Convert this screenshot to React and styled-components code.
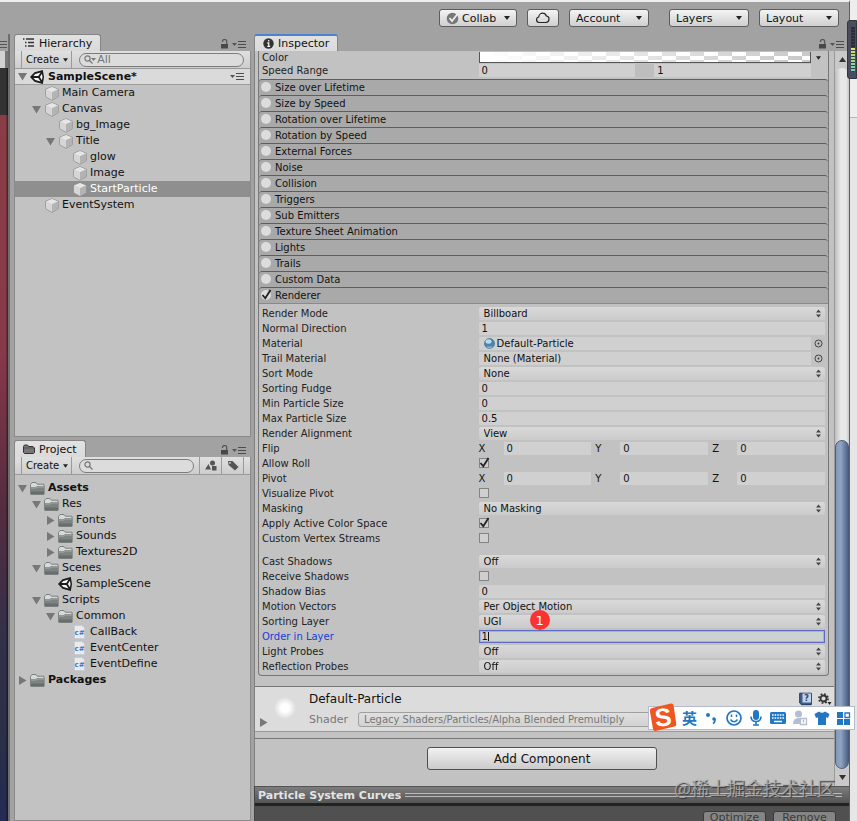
import React, { useId, useState } from 'react';
import styled, { createGlobalStyle, css } from 'styled-components';

const GlobalStyle = createGlobalStyle`
  * {
    box-sizing: border-box;
  }
  body {
    margin: 0;
    overflow: hidden;
    font-family: "DejaVu Sans", "Noto Sans CJK SC", sans-serif;
    font-size: 11px;
    color: #111;
  }
  button, input, select {
    font: inherit;
    color: inherit;
    margin: 0;
    padding: 0;
    border: 0;
    border-radius: 0;
    background: none;
  }
  svg {
    display: block;
    flex: none;
  }
`;

const Screen = styled.div`
  position: relative;
  display: flex;
  height: 100vh;
  overflow: hidden;
  background: #e9e9e9;
`;

const Editor = styled.div`
  flex: 1;
  min-width: 0;
  display: flex;
  flex-direction: column;
  background: #a2a2a2;
  border-top: 2px solid #efefef;
  border-right: 1px solid #5f5f5f;
`;

const Desktop = styled.div`
  width: 7px;
  background: linear-gradient(#eeeeee 117px, #b5b5b5 117px, #b5b5b5 118px, #e6e6e6 118px);
`;

const Meter = styled.div`
  position: absolute;
  top: 20px;
  right: 0;
  width: 10px;
  height: 59px;
  padding: 6px 1px 6px 3px;
  background: #4a4d5c;
  border: 1px solid #33353f;
  border-radius: 3px 0 0 3px;
`;

const MeterBars = styled.div`
  width: 4px;
  height: 100%;
  background:
    repeating-linear-gradient(transparent 0 2px, #3c3f4c 2px 3px),
    linear-gradient(#2b2e38 46%, #e6e470 46%, #a9dc7c 65%, #6cd0c4);
`;

/* top toolbar */

const MainToolbar = styled.header`
  display: flex;
  justify-content: flex-end;
  gap: 10px;
  height: 32px;
  padding: 7px 10px 0 0;
`;

const ToolbarButton = styled.button`
  display: flex;
  align-items: center;
  gap: 3px;
  width: ${(p) => p.$width || 80}px;
  height: 18px;
  margin-left: ${(p) => (p.$apart ? 10 : 0)}px;
  padding: 0 6px;
  border: 1px solid #5d5d5d;
  border-radius: 3px;
  background: linear-gradient(#f4f4f4, #cfcfcf);

  svg:last-child {
    margin-left: auto;
  }
`;

/* docked panels */

const Workspace = styled.main`
  flex: 1;
  min-height: 0;
  display: flex;
`;

const SceneEdge = styled.div`
  width: 10px;
  margin-right: 4px;
  display: flex;
  flex-direction: column;
  border-right: 2px solid #6d6d6d;
`;

const SceneEdgeTab = styled.div`
  height: 17px;
  padding-top: 7px;
`;

const SceneEdgeBar = styled.div`
  height: 17px;
  border-right: 3px solid #777;
  background: #d2d2d2;
`;

const SceneEdgeView = styled.div`
  flex: 1;
  background:
    linear-gradient(90deg, transparent 70%, #0008),
    linear-gradient(#333 47px, #8b3d45 47px, #86394a 38%, #552c40 58%, #33304a 76%, #2b2f47 88%, #242b55);
`;

const SideColumn = styled.div`
  width: 237px;
  margin-right: 3px;
  display: flex;
  flex-direction: column;
  gap: 3px;
`;

const Panel = styled.section`
  flex: ${(p) => p.$grow || 1} 1 0;
  min-width: 0;
  min-height: 0;
  display: flex;
  flex-direction: column;
`;

const TabBar = styled.div`
  display: flex;
  align-items: flex-end;
  height: 17px;
  padding-right: 4px;
`;

const Tab = styled.button`
  display: flex;
  align-items: center;
  gap: 4px;
  height: 17px;
  padding: 0 8px;
  border: 1px solid #858585;
  border-bottom: 0;
  border-top: ${(p) => (p.$focused ? '2px solid #4b82d2' : '1px solid #858585')};
  border-radius: 3px 3px 0 0;
  background: linear-gradient(#e2e2e2, #dadada);
`;

const TabTools = styled.div`
  display: flex;
  align-items: flex-end;
  gap: 3px;
  margin-left: auto;
  padding-bottom: 2px;
`;

const PanelBody = styled.div`
  flex: 1;
  min-height: 0;
  border: 1px solid #8b8b8b;
  border-top: 0;
  background: #c2c2c2;
`;

const PanelToolbar = styled.div`
  display: flex;
  align-items: center;
  height: 18px;
  padding: 0 6px;
  border-bottom: 1px solid #9a9a9a;
  background: linear-gradient(#e0e0e0, #cdcdcd);
`;

const CreateButton = styled.button`
  display: flex;
  align-items: center;
  gap: 4px;
  height: 17px;
  margin-right: 7px;
  padding: 0 3px 0 4px;
  border: solid #9a9a9a;
  border-width: 0 1px;
  font-size: 10px;
`;

const Search = styled.label`
  flex: 1;
  min-width: 0;
  display: flex;
  align-items: center;
  gap: 1px;
  height: 14px;
  padding: 0 4px;
  border: 1px solid #7d7d7d;
  border-radius: 7px;
  background: #dcdcdc;
`;

const SearchInput = styled.input`
  flex: 1;
  width: 0;
  min-width: 0;
  height: 12px;
  outline: 0;

  &::placeholder {
    color: #777;
    opacity: 1;
  }
`;

const Filters = styled.div`
  display: flex;
  margin-left: 5px;
  border-right: 1px solid #9a9a9a;
`;

const FilterButton = styled.button`
  display: grid;
  place-items: center;
  width: 22px;
  height: 17px;
  border-left: 1px solid #9a9a9a;
`;

const Tree = styled.ul`
  margin: 0;
  padding: ${(p) => (p.$spaced ? 5 : 0)}px 0 0;
  list-style: none;
`;

const TreeRow = styled.li`
  display: flex;
  align-items: center;
  gap: 3px;
  height: 16px;
  padding-left: ${(p) => 3 + p.$depth * 14}px;
  padding-right: 5px;
  line-height: 16px;
  white-space: nowrap;

  ${(p) => p.$bold && css`
    font-weight: bold;
  `}
  ${(p) => p.$scene && css`
    border-bottom: 1px solid #9b9b9b;
    background: #dadada;
  `}
  ${(p) => p.$selected && css`
    background: #8f8f8f;
    color: #fff;
  `}
`;

const Arrow = styled.span`
  width: 9px;
`;

const IconSlot = styled.span`
  display: grid;
  place-items: center;
  width: 15px;
`;

const RowMenu = styled.span`
  margin-left: auto;
`;

/* inspector */

const InspectorBody = styled.div`
  flex: 1;
  min-height: 0;
  display: flex;
  border-left: 1px solid #808080;
  background: #c2c2c2;
`;

const InspectorContent = styled.div`
  flex: 1;
  min-width: 0;
`;

const ModuleBox = styled.div`
  margin: 0 5px 10px 3px;
  border: 1px solid #777;
  border-top: 0;
  border-radius: 0 0 4px 4px;
`;

const ModuleFields = styled.div`
  padding: ${(p) => (p.$first ? '0 3px 1px' : '3px 3px 1px')};
`;

const ModuleHeader = styled.label`
  display: flex;
  align-items: center;
  gap: 3px;
  height: 16px;
  padding-left: 2px;
  border-top: 1px solid #5e5e5e;
  border-radius: 3px 3px 0 0;
  background: #a9a9a9;
  font-size: 10px;

  &:last-of-type {
    box-shadow: 0 1px #8a8a8a;
  }
`;

const TickBox = styled.span`
  position: relative;
  display: block;
  width: 11px;
  height: 11px;
`;

const TickInput = styled.input`
  appearance: none;
  display: block;
  width: 10px;
  height: 10px;
  border: ${(p) => (p.$round ? '0' : '1px solid #848484')};
  border-radius: ${(p) => (p.$round ? '5px' : '0')};
  background: ${(p) => (p.$round ? '#dcdcdc' : '#cfcfcf')};
`;

const TickMark = styled.svg`
  position: absolute;
  top: -1px;
  left: 0;
  pointer-events: none;
`;

const FieldRow = styled.div`
  display: grid;
  grid-template-columns: minmax(0, 5fr) minmax(0, 8fr);
  align-items: center;
  height: ${(p) => (p.$clipped ? 12 : 15)}px;
  margin-top: ${(p) => (p.$spaced ? 8 : 0)}px;
  font-size: 10px;
  line-height: 13px;
  white-space: nowrap;
`;

const FieldLabel = styled.label`
  color: ${(p) => (p.$active ? '#1440d8' : '#222')};
`;

const FieldValue = styled.div`
  position: relative;
  display: flex;
  align-items: center;
  gap: ${(p) => p.$gap || 0}px;
`;

const TextInput = styled.input`
  flex: 1;
  width: 0;
  height: 13px;
  padding: 0 3px;
  background: #d0d0d0;
  outline: 0;

  ${(p) => p.$active && css`
    padding: 0 2px;
    border: 1px solid #5f6cc4;
    box-shadow: inset 0 0 0 1px #a7aee6;
    background: #ccd2cf;
    caret-color: transparent;
  `}
`;

const TextCaret = styled.span`
  position: absolute;
  left: 9px;
  top: 2px;
  width: 1px;
  height: 9px;
  background: #111;
`;

const Popup = styled.select`
  appearance: none;
  flex: 1;
  height: 13px;
  padding: 0 5px;
  border-radius: 2px;
  background: linear-gradient(#d9d9d9, #cbcbcb);
  outline: 0;
`;

const PopupArrows = styled.svg`
  position: absolute;
  right: 4px;
  top: 2px;
  pointer-events: none;
`;

const ObjectField = styled.button`
  flex: 1;
  display: flex;
  align-items: center;
  gap: 2px;
  height: 13px;
  padding-left: 5px;
  background: #d0d0d0;
`;

const PickerButton = styled.button`
  display: grid;
  place-items: center;
  width: 14px;
  height: 13px;
`;

const Axis = styled.label`
  flex: 1;
  display: flex;
  align-items: center;
`;

const AxisName = styled.span`
  width: 25px;
`;

const ColorSwatch = styled.button`
  flex: 1;
  height: 11px;
  border: 1px solid #555;
  border-top: 0;
  background:
    linear-gradient(90deg, #fff, transparent),
    repeating-conic-gradient(#c8c8c8 0 25%, #fff 0 50%) 0 0 / 28px 8px;
`;

const RangeGap = styled.span`
  width: 19px;
  height: 13px;
  background: #bebebe;
`;

const Badge = styled.span`
  position: absolute;
  left: 51px;
  top: -20px;
  z-index: 1;
  display: grid;
  place-items: center;
  width: 20px;
  height: 20px;
  border-radius: 10px;
  background: #fa3232;
  color: #fff;
  font-size: 13px;
`;

const MaterialPanel = styled.div`
  display: flex;
  height: 46px;
  border-top: 1px solid #777;
  border-bottom: 1px solid #999;
  background: #dcdcdc;
`;

const MaterialFoldout = styled.div`
  display: flex;
  align-items: flex-end;
  padding: 0 0 4px 4px;
`;

const MaterialPreview = styled.div`
  width: 39px;
  margin-right: 2px;
  background: radial-gradient(circle at 17px 21px, #fff 4px, #dcdcdc 11px);
`;

const MaterialInfo = styled.div`
  flex: 1;
  min-width: 0;
  padding: 2px 2px 0 0;
`;

const MaterialLine = styled.div`
  display: flex;
  align-items: center;
  gap: 6px;
  height: 20px;
`;

const MaterialName = styled.span`
  flex: 1;
  font-size: 12px;
`;

const ShaderLabel = styled.label`
  width: 43px;
  color: #777;
`;

const ShaderSelect = styled.select`
  appearance: none;
  flex: 1;
  min-width: 0;
  height: 15px;
  padding: 0 5px;
  border: 1px solid #a0a0a0;
  border-radius: 3px;
  background: linear-gradient(#e0e0e0, #d2d2d2);
  color: #777;
  font-size: 10px;
  opacity: 1;
`;

const AddComponentArea = styled.div`
  display: flex;
  justify-content: center;
  margin-top: 6px;
  padding: 8px 5px 0 0;
  border-top: 1px solid #777;
`;

const AddComponentButton = styled.button`
  width: 230px;
  height: 23px;
  border: 1px solid #4f4f4f;
  border-radius: 3px;
  background: linear-gradient(#f2f2f2, #cbcbcb);
  font-size: 12px;
`;

const ScrollBar = styled.div`
  display: flex;
  flex-direction: column;
  align-items: center;
  width: 15px;
  border-left: 1px solid #9a9a9a;
  background: #c9c9c9;
`;

const ScrollArrow = styled.button`
  display: grid;
  place-items: center;
  width: 14px;
  height: 17px;
`;

const ScrollTrack = styled.div`
  flex: 1;
  display: flex;
  align-items: flex-end;
  width: 14px;
  border-radius: 7px;
  background: linear-gradient(90deg, #bdbdbd, #e8e8e8 40%, #e8e8e8 80%, #c4c4c4);
`;

const ScrollThumb = styled.div`
  width: 14px;
  height: 47%;
  border: 1px solid #4a5a78;
  border-radius: 7px;
  background: linear-gradient(90deg, #8499b8, #90a4c4 40%, #6d82a3 70%, #4d6285);
`;

const CurvesPanel = styled.section`
  height: 35px;
  overflow: hidden;
  border-left: 1px solid #444;
  background: #505050;
`;

const CurvesHeader = styled.div`
  display: flex;
  align-items: center;
  gap: 4px;
  height: 17px;
  padding: 0 7px 0 3px;
  border-top: 1px solid #555;
  background: linear-gradient(#7c7c7c, #555);
  color: #e4e4e4;
  font-weight: bold;
`;

const CurvesLines = styled.span`
  flex: 1;
  height: 4px;
  border: solid #b9b9b9;
  border-width: 1px 0;
`;

const CurvesTools = styled.div`
  display: flex;
  justify-content: flex-end;
  gap: 7px;
  padding: 5px 13px 0;
  border-top: 3px solid #222;
`;

const CurvesButton = styled.button`
  width: 63px;
  height: 18px;
  flex: none;
  padding-bottom: 6px;
  border: 1px solid #3a3a3a;
  border-radius: 3px;
  background: #858585;
  color: #3c3c3c;
  line-height: 11px;
`;

/* things floating over the editor */

const ImeBar = styled.div`
  position: absolute;
  top: 706px;
  right: 2px;
  display: flex;
  align-items: center;
  gap: 6px;
  height: 24px;
  padding: 0 3px 0 33px;
  border: 1px solid #b4bccb;
  background: #fff;
  color: #2277c2;
`;

const ImeLogo = styled.svg`
  position: absolute;
  left: 0;
  top: -5px;
`;

const ImeMode = styled.span`
  width: 16px;
  font: bold 15px/20px "Noto Sans CJK SC", sans-serif;
`;

const Watermark = styled.div`
  position: absolute;
  top: 774px;
  right: 22px;
  color: #b5b5b5cc;
  font: 18px/26px "Noto Sans CJK SC", sans-serif;
  text-shadow: 1px 1px 1px #333;
`;

const MenuIcon = () => (
  <svg width="15" height="9" viewBox="0 0 15 9">
    <path d="M0 3h5L2.500 6z" fill="#555" />
    <path d="M6 1.500h8M6 4.500h8M6 7.500h8" stroke="#4c4c4c" strokeWidth="1.200" />
  </svg>
);

const LockIcon = () => (
  <svg width="9" height="10" viewBox="0 0 9 10">
    <path d="M1 5h7v4.500H1z" fill="#484848" />
    <path d="M2.500 3V2.500a2 2 0 0 1 4.200 0V5" fill="none" stroke="#555" strokeWidth="1.200" />
  </svg>
);

const Caret = ({ size = 6 }) => (
  <svg width={size} height="4" viewBox="0 0 6 4">
    <path d="M0 0h6L3 4z" fill="#222" />
  </svg>
);

const Foldout = ({ open }) => (
  <svg width="9" height="9" viewBox="0 0 9 9">
    <path d={open ? 'M0 1h9L4.500 8.500z' : 'M1 0l7.500 4.500L1 9z'} fill="#777" />
  </svg>
);

const HierarchyIcon = () => (
  <svg width="12" height="10" viewBox="0 0 12 10">
    <path d="M0 1h1.500M3 1h8M2 4.500h1.500M5 4.500h6M2 8h1.500M5 8h6" stroke="#333" strokeWidth="1.300" />
  </svg>
);

const InfoIcon = () => (
  <svg width="11" height="11" viewBox="0 0 11 11">
    <circle cx="5.500" cy="5.500" r="5.200" fill="#333" />
    <path d="M5.700 2v1.600M4.300 5h1.400v3.300M4.200 8.300h3" stroke="#eee" strokeWidth="1.300" fill="none" />
  </svg>
);

const SmallFolderIcon = () => (
  <svg width="12" height="10" viewBox="0 0 12 10">
    <path d="M.5 8.500v-6l1-1.500h3l1 1.500H10L11.500 4v4.500l-1 1h-9z" fill="#777" stroke="#333" />
    <path d="M1 4h10" stroke="#555" />
  </svg>
);

const SearchIcon = ({ filter }) => (
  <svg width={filter ? 12 : 9} height="9" viewBox={filter ? '0 0 12 9' : '0 0 9 9'}>
    <circle cx="3.500" cy="3.500" r="2.600" fill="none" stroke="#777" strokeWidth="1.200" />
    <path d="M5.500 5.500L8.500 8.500" stroke="#777" strokeWidth="1.300" />
    {filter && <path d="M7 3h5l-2.500 3z" fill="#777" />}
  </svg>
);

const CubeIcon = () => (
  <svg width="14" height="15" viewBox="0 0 14 15">
    <path d="M7 .7l6.300 2.600v7.400L7 14.300.7 10.700V3.300z" fill="#c4c4c4" stroke="#8d8d8d" strokeWidth=".8" />
    <path d="M7 1l6 2.500L7 6.200 1 3.500z" fill="#e6e6e6" />
    <path d="M1 3.500l6 2.700v7.500l-6-3.300z" fill="#d6d6d6" />
    <path d="M7 6.200l6-2.700v6.900l-6 3.300z" fill="#b3b3b3" />
  </svg>
);

const UnityIcon = () => (
  <svg width="15" height="14" viewBox="0 0 15 14">
    <path d="M0 7L4.500 2.200 12.800 0 14 7l-1.200 7-8.300-2.200z" fill="#1b1b1b" />
    <path d="M5.300 3.900L10.600 2.500 8.300 6H3.400zM3.400 8h4.900l2.300 3.500-5.300-1.400zM9.800 7l2.100-3.300.6 3.300-.6 3.300z" fill="#f5f5f5" />
  </svg>
);

const FolderIcon = () => (
  <svg width="15" height="13" viewBox="0 0 15 13">
    <path d="M.5 12V2.500l1.500-2h4l1.300 1.700H14V12z" fill="#d5d9d8" stroke="#7c8280" />
    <path d="M.5 5H6l1-1h7.500v8.500H.5z" fill="#7c8381" />
    <path d="M1 6h5.500l1-1H14" stroke="#a4aaa8" fill="none" />
    <path d="M1 9.500h13v3H1z" fill="#666d6b" />
  </svg>
);

const ScriptIcon = () => (
  <svg width="11" height="14" viewBox="0 0 11 14">
    <path d="M.5.500H8L10.500 3v10.500H.5z" fill="#e8ebf0" stroke="#c5cad2" strokeWidth=".8" />
    <text x="5.500" y="10" textAnchor="middle" fontSize="7" fontWeight="bold" fill="#3f78c8">c#</text>
  </svg>
);

const TypeFilterIcon = () => (
  <svg width="12" height="11" viewBox="0 0 12 11">
    <circle cx="7.500" cy="3" r="2.500" fill="#555" />
    <path d="M0 9.500L3.500 4 6 9.500zM7 6h4.500v4.500H7z" fill="#555" />
  </svg>
);

const TagIcon = () => (
  <svg width="12" height="11" viewBox="0 0 12 11">
    <path d="M1 1h4.500L11.500 7 8 10.500 1.500 5z" fill="#555" />
    <circle cx="3" cy="2.800" r=".9" fill="#ddd" />
  </svg>
);

const SphereIcon = () => (
  <svg width="11" height="11" viewBox="0 0 11 11">
    <circle cx="5.500" cy="5.500" r="5" fill="#4a84b0" stroke="#48677d" strokeWidth=".6" />
    <ellipse cx="4.500" cy="3.500" rx="3" ry="2.200" fill="#b5dcf0" />
    <path d="M2 8.500a4.500 4.500 0 0 0 7 0z" fill="#86b9d6" />
  </svg>
);

const PickerIcon = () => (
  <svg width="9" height="9" viewBox="0 0 9 9">
    <circle cx="4.500" cy="4.500" r="3.500" fill="none" stroke="#444" />
    <circle cx="4.500" cy="4.500" r=".9" fill="#333" />
  </svg>
);

const CollabIcon = () => (
  <svg width="13" height="13" viewBox="0 0 13 13">
    <circle cx="6.500" cy="6.500" r="5.800" fill="#777" />
    <path d="M3.500 6l2.500 3L11.500 2" fill="none" stroke="#eee" strokeWidth="1.800" />
  </svg>
);

const CloudIcon = () => (
  <svg width="18" height="12" viewBox="0 0 18 12">
    <path d="M5 10.500a2.800 2.800 0 0 1-.3-5.500C5 2.500 7 1 9 1.200c1.700.1 2.900 1.200 3.300 2.800 1.700.1 2.900 1.500 2.700 3.200-.2 2-1.500 3.300-3 3.300z" fill="none" stroke="#222" strokeWidth="1.200" />
  </svg>
);

const HelpIcon = () => (
  <svg width="13" height="14" viewBox="0 0 13 14">
    <path d="M.7 1.200h11.600v11.500H2.500L.7 11z" fill="#3f5d8c" stroke="#22375c" />
    <path d="M3.500 1.500h8.500v9H3.500z" fill="#c2d2e8" />
    <text x="7.600" y="9" textAnchor="middle" fontSize="8" fontWeight="bold" fill="#27436f">?</text>
  </svg>
);

const GearIcon = () => (
  <svg width="14" height="13" viewBox="0 0 14 13">
    <circle cx="5.500" cy="5.500" r="3" fill="none" stroke="#333" strokeWidth="1.800" />
    <circle cx="5.500" cy="5.500" r="4.600" fill="none" stroke="#333" strokeWidth="1.600" strokeDasharray="1.800 1.813" />
    <path d="M9.500 9h4l-2 3z" fill="#222" />
  </svg>
);

function Tick({ id, round, checked }) {
  const [on, setOn] = useState(Boolean(checked));
  return (
    <TickBox>
      <TickInput id={id} type="checkbox" $round={round} checked={on} onChange={() => setOn(!on)} />
      {on && (
        <TickMark width="11" height="11" viewBox="0 0 11 11">
          <path d="M1.500 6l2.800 3.300L9.500 1" fill="none" stroke="#222" strokeWidth="1.800" />
        </TickMark>
      )}
    </TickBox>
  );
}

const hierarchy = [
  { name: 'Main Camera', depth: 1 },
  { name: 'Canvas', depth: 1, open: true },
  { name: 'bg_Image', depth: 2 },
  { name: 'Title', depth: 2, open: true },
  { name: 'glow', depth: 3 },
  { name: 'Image', depth: 3 },
  { name: 'StartParticle', depth: 3, selected: true },
  { name: 'EventSystem', depth: 1 },
];

const assets = [
  { name: 'Assets', depth: 0, icon: FolderIcon, open: true, bold: true },
  { name: 'Res', depth: 1, icon: FolderIcon, open: true },
  { name: 'Fonts', depth: 2, icon: FolderIcon, open: false },
  { name: 'Sounds', depth: 2, icon: FolderIcon, open: false },
  { name: 'Textures2D', depth: 2, icon: FolderIcon, open: false },
  { name: 'Scenes', depth: 1, icon: FolderIcon, open: true },
  { name: 'SampleScene', depth: 2, icon: UnityIcon },
  { name: 'Scripts', depth: 1, icon: FolderIcon, open: true },
  { name: 'Common', depth: 2, icon: FolderIcon, open: true },
  { name: 'CallBack', depth: 3, icon: ScriptIcon },
  { name: 'EventCenter', depth: 3, icon: ScriptIcon },
  { name: 'EventDefine', depth: 3, icon: ScriptIcon },
  { name: 'Packages', depth: 0, icon: FolderIcon, open: false, bold: true },
];

const modules = [
  'Size over Lifetime',
  'Size by Speed',
  'Rotation over Lifetime',
  'Rotation by Speed',
  'External Forces',
  'Noise',
  'Collision',
  'Triggers',
  'Sub Emitters',
  'Texture Sheet Animation',
  'Lights',
  'Trails',
  'Custom Data',
  'Renderer',
];

const rendererFields = [
  { label: 'Render Mode', type: 'popup', value: 'Billboard' },
  { label: 'Normal Direction', type: 'text', value: '1' },
  { label: 'Material', type: 'object', value: 'Default-Particle', icon: true },
  { label: 'Trail Material', type: 'object', value: 'None (Material)' },
  { label: 'Sort Mode', type: 'popup', value: 'None' },
  { label: 'Sorting Fudge', type: 'text', value: '0' },
  { label: 'Min Particle Size', type: 'text', value: '0' },
  { label: 'Max Particle Size', type: 'text', value: '0.5' },
  { label: 'Render Alignment', type: 'popup', value: 'View' },
  { label: 'Flip', type: 'vector' },
  { label: 'Allow Roll', type: 'tick', value: true },
  { label: 'Pivot', type: 'vector' },
  { label: 'Visualize Pivot', type: 'tick' },
  { label: 'Masking', type: 'popup', value: 'No Masking' },
  { label: 'Apply Active Color Space', type: 'tick', value: true },
  { label: 'Custom Vertex Streams', type: 'tick' },
  { label: 'Cast Shadows', type: 'popup', value: 'Off', spaced: true },
  { label: 'Receive Shadows', type: 'tick' },
  { label: 'Shadow Bias', type: 'text', value: '0' },
  { label: 'Motion Vectors', type: 'popup', value: 'Per Object Motion' },
  { label: 'Sorting Layer', type: 'popup', value: 'UGI' },
  { label: 'Order in Layer', type: 'text', value: '1', active: true, badge: '1' },
  { label: 'Light Probes', type: 'popup', value: 'Off' },
  { label: 'Reflection Probes', type: 'popup', value: 'Off' },
];

function TreeItem({ item, icon: Icon }) {
  return (
    <TreeRow $depth={item.depth} $bold={item.bold} $selected={item.selected}>
      <Arrow>{item.open !== undefined && <Foldout open={item.open} />}</Arrow>
      <IconSlot><Icon /></IconSlot>
      {item.name}
    </TreeRow>
  );
}

function Field({ field }) {
  const id = useId();
  const { type, value } = field;
  return (
    <FieldRow $spaced={field.spaced}>
      <FieldLabel htmlFor={id} $active={field.active}>{field.label}</FieldLabel>
      <FieldValue $gap={type === 'vector' ? 4 : 0}>
        {type === 'text' && (
          <TextInput id={id} defaultValue={value} $active={field.active} autoFocus={field.active} />
        )}
        {type === 'popup' && (
          <>
            <Popup id={id} defaultValue={value}>
              <option>{value}</option>
            </Popup>
            <PopupArrows width="5" height="9" viewBox="0 0 5 9">
              <path d="M0 3.500h5L2.500.500zM0 5.500h5L2.500 8.500z" fill="#444" />
            </PopupArrows>
          </>
        )}
        {type === 'object' && (
          <>
            <ObjectField id={id}>
              {field.icon && <SphereIcon />}
              {value}
            </ObjectField>
            <PickerButton aria-label={`Select ${field.label}`}><PickerIcon /></PickerButton>
          </>
        )}
        {type === 'vector' && ['X', 'Y', 'Z'].map((axis, i) => (
          <Axis key={axis}>
            <AxisName>{axis}</AxisName>
            <TextInput id={i === 0 ? id : undefined} defaultValue="0" />
          </Axis>
        ))}
        {type === 'tick' && <Tick id={id} checked={value} />}
        {field.active && <TextCaret />}
        {field.badge && <Badge>{field.badge}</Badge>}
      </FieldValue>
    </FieldRow>
  );
}

function Hierarchy() {
  return (
    <Panel $grow={403}>
      <TabBar>
        <Tab><HierarchyIcon />Hierarchy</Tab>
        <TabTools><LockIcon /><MenuIcon /></TabTools>
      </TabBar>
      <PanelBody>
        <PanelToolbar>
          <CreateButton>Create <Caret size={5} /></CreateButton>
          <Search>
            <SearchIcon filter />
            <SearchInput placeholder="All" aria-label="Search hierarchy" />
          </Search>
        </PanelToolbar>
        <Tree>
          <TreeRow $depth={0} $bold $scene>
            <Arrow><Foldout open /></Arrow>
            <IconSlot><UnityIcon /></IconSlot>
            SampleScene*
            <RowMenu><MenuIcon /></RowMenu>
          </TreeRow>
          {hierarchy.map((item) => (
            <TreeItem key={item.name} item={item} icon={CubeIcon} />
          ))}
        </Tree>
      </PanelBody>
    </Panel>
  );
}

function Project() {
  return (
    <Panel $grow={381}>
      <TabBar>
        <Tab><SmallFolderIcon />Project</Tab>
        <TabTools><LockIcon /><MenuIcon /></TabTools>
      </TabBar>
      <PanelBody>
        <PanelToolbar>
          <CreateButton>Create <Caret size={5} /></CreateButton>
          <Search>
            <SearchIcon />
            <SearchInput aria-label="Search project" />
          </Search>
          <Filters>
            <FilterButton aria-label="Search by type"><TypeFilterIcon /></FilterButton>
            <FilterButton aria-label="Search by label"><TagIcon /></FilterButton>
          </Filters>
        </PanelToolbar>
        <Tree $spaced>
          {assets.map((item) => (
            <TreeItem key={item.name} item={item} icon={item.icon} />
          ))}
        </Tree>
      </PanelBody>
    </Panel>
  );
}

function Inspector() {
  return (
    <Panel>
      <TabBar>
        <Tab $focused><InfoIcon />Inspector</Tab>
        <TabTools><LockIcon /><MenuIcon /></TabTools>
      </TabBar>
      <InspectorBody>
        <InspectorContent>
          <ModuleBox>
            <ModuleFields $first>
              <FieldRow $clipped>
                <FieldLabel htmlFor="speed-color">Color</FieldLabel>
                <FieldValue>
                  <ColorSwatch id="speed-color" />
                  <PickerButton aria-label="Color mode"><Caret size={5} /></PickerButton>
                </FieldValue>
              </FieldRow>
              <FieldRow>
                <FieldLabel htmlFor="speed-min">Speed Range</FieldLabel>
                <FieldValue>
                  <TextInput id="speed-min" defaultValue="0" />
                  <RangeGap />
                  <TextInput aria-label="Speed maximum" defaultValue="1" />
                  <PickerButton as="span" />
                </FieldValue>
              </FieldRow>
            </ModuleFields>
            {modules.map((name) => (
              <ModuleHeader key={name}>
                <Tick round checked={name === 'Renderer'} />
                {name}
              </ModuleHeader>
            ))}
            <ModuleFields>
              {rendererFields.map((field) => (
                <Field key={field.label} field={field} />
              ))}
            </ModuleFields>
          </ModuleBox>
          <MaterialPanel>
            <MaterialFoldout><Foldout /></MaterialFoldout>
            <MaterialPreview />
            <MaterialInfo>
              <MaterialLine>
                <MaterialName>Default-Particle</MaterialName>
                <HelpIcon />
                <GearIcon />
              </MaterialLine>
              <MaterialLine>
                <ShaderLabel htmlFor="shader">Shader</ShaderLabel>
                <ShaderSelect id="shader" disabled>
                  <option>Legacy Shaders/Particles/Alpha Blended Premultiply</option>
                </ShaderSelect>
              </MaterialLine>
            </MaterialInfo>
          </MaterialPanel>
          <AddComponentArea>
            <AddComponentButton>Add Component</AddComponentButton>
          </AddComponentArea>
        </InspectorContent>
        <ScrollBar>
          <ScrollArrow aria-label="Scroll up">
            <svg width="7" height="5" viewBox="0 0 7 5"><path d="M0 5h7L3.500 0z" fill="#333" /></svg>
          </ScrollArrow>
          <ScrollTrack><ScrollThumb /></ScrollTrack>
          <ScrollArrow aria-label="Scroll down">
            <svg width="7" height="5" viewBox="0 0 7 5"><path d="M0 0h7L3.500 5z" fill="#333" /></svg>
          </ScrollArrow>
        </ScrollBar>
      </InspectorBody>
      <CurvesPanel>
        <CurvesHeader>Particle System Curves<CurvesLines /></CurvesHeader>
        <CurvesTools>
          <CurvesButton>Optimize</CurvesButton>
          <CurvesButton>Remove</CurvesButton>
        </CurvesTools>
      </CurvesPanel>
    </Panel>
  );
}

function InputMethod() {
  return (
    <ImeBar>
      <ImeLogo width="28" height="30" viewBox="0 0 28 30">
        <path d="M3 6L22 1.500q2-.4 2.500 1.500L27.300 22q.2 2-1.800 2.500L6.500 29q-2 .3-2.500-1.700L.8 8.500Q.6 6.500 3 6z" fill="#f0561f" />
        <text x="14" y="24" textAnchor="middle" fontFamily="Liberation Sans, sans-serif" fontWeight="bold" fontSize="25" fill="#fff" transform="rotate(-6 14 15)">S</text>
      </ImeLogo>
      <ImeMode>英</ImeMode>
      <svg width="16" height="16" viewBox="0 0 16 16">
        <circle cx="4" cy="5" r="2" fill="#2277c2" />
        <circle cx="10" cy="9" r="1.800" fill="#2277c2" />
        <path d="M11 9q.5 3-2 4.500" fill="none" stroke="#2277c2" strokeWidth="1.500" />
      </svg>
      <svg width="16" height="16" viewBox="0 0 16 16">
        <circle cx="8" cy="8" r="7" fill="none" stroke="#2277c2" strokeWidth="1.700" />
        <path d="M5.500 4.500v2.500M10.500 4.500v2.500M4.500 9.500q3.500 4.500 7 0" fill="none" stroke="#2277c2" strokeWidth="1.500" />
      </svg>
      <svg width="16" height="16" viewBox="0 0 16 16">
        <rect x="5" y="0" width="6" height="10" rx="3" fill="#2277c2" />
        <path d="M3 6.500q0 5 5 5t5-5M8 11.500v3M5 15h6" fill="none" stroke="#2277c2" strokeWidth="1.600" />
      </svg>
      <svg width="16" height="16" viewBox="0 0 16 16">
        <rect x="0" y="2" width="16" height="12" rx="1.500" fill="#2277c2" />
        <path d="M2 5h12M2 8h12" stroke="#fff" strokeWidth="1.600" strokeDasharray="1.600 1" />
        <path d="M4 11.500h8" stroke="#fff" strokeWidth="1.500" />
      </svg>
      <svg width="16" height="16" viewBox="0 0 16 16">
        <circle cx="6.500" cy="4" r="3.500" fill="#b5bdd0" />
        <path d="M1 14q0-6 5.500-6t5.500 6z" fill="#b5bdd0" />
        <path d="M8.500 8.500h6v6h-6z" fill="#fff" stroke="#b5bdd0" strokeWidth="1.300" />
        <path d="M11.500 9.500v3" stroke="#b5bdd0" strokeWidth="1.500" />
      </svg>
      <svg width="16" height="16" viewBox="0 0 16 16">
        <path d="M5 1.500q3 2.500 6 0L15.500 4 14 8l-2-.8V15H4V7.200L2 8 .5 4z" fill="#2277c2" />
      </svg>
      <svg width="15" height="16" viewBox="0 0 15 16">
        <path d="M1 2h6v6H1zM1 9h6v6H1zM8 9h6v6H8z" fill="#2277c2" />
        <path d="M9 3h4.500v4.500H9z" fill="none" stroke="#2277c2" strokeWidth="1.300" />
      </svg>
    </ImeBar>
  );
}

function App() {
  return (
    <Screen>
      <GlobalStyle />
      <Editor>
        <MainToolbar>
          <ToolbarButton $width={78}><CollabIcon />Collab<Caret /></ToolbarButton>
          <ToolbarButton $width={32} aria-label="Services"><CloudIcon /></ToolbarButton>
          <ToolbarButton>Account<Caret /></ToolbarButton>
          <ToolbarButton $apart>Layers<Caret /></ToolbarButton>
          <ToolbarButton>Layout<Caret /></ToolbarButton>
        </MainToolbar>
        <Workspace>
          <SceneEdge>
            <SceneEdgeTab>
              <svg width="7" height="7" viewBox="0 0 7 7">
                <path d="M0 .5h7M0 3.500h7M0 6.500h7" stroke="#555" />
              </svg>
            </SceneEdgeTab>
            <SceneEdgeBar />
            <SceneEdgeView />
          </SceneEdge>
          <SideColumn>
            <Hierarchy />
            <Project />
          </SideColumn>
          <Inspector />
        </Workspace>
      </Editor>
      <Desktop />
      <Meter><MeterBars /></Meter>
      <Watermark>@稀土掘金技术社区</Watermark>
      <InputMethod />
    </Screen>
  );
}

export default App;
